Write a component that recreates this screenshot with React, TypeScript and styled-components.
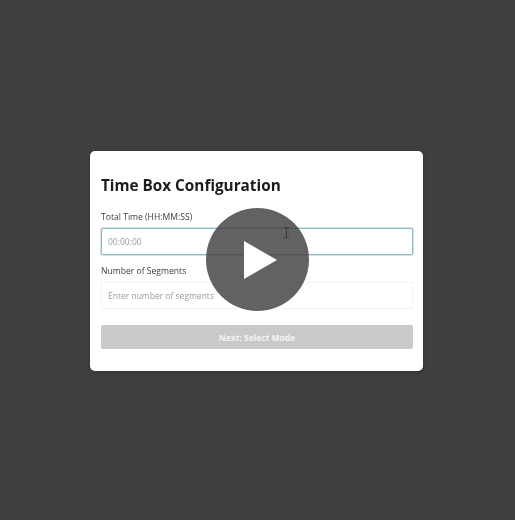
import styled, { createGlobalStyle } from 'styled-components'

const GlobalStyle = createGlobalStyle`
	html,
	body {
		margin: 0;
		padding: 0;
		background: #3f3f3f;
	}
`

const App = () => {
	return (
		<Page>
			<GlobalStyle />
			<Card>
				<Title>Time Box Configuration</Title>
				<Field>
					<Label>Total Time (HH:MM:SS)</Label>
					<Input $focused placeholder="00:00:00" readOnly />
				</Field>
				<Field>
					<Label>Number of Segments</Label>
					<Input placeholder="Enter number of segments" readOnly />
				</Field>
				<NextButton disabled>Next: Select Mode</NextButton>
			</Card>
			<TextCursor width="7" height="11" viewBox="0 0 7 11">
				<path
					d="M1 0.5h5M1 10.5h5M3.5 0.5v10"
					stroke="#2f2f2f"
					strokeWidth="1.1"
					fill="none"
				/>
			</TextCursor>
			<PlayOverlay>
				<svg width="36" height="40" viewBox="0 0 36 40">
					<polygon points="1,1 34,20 1,39" fill="#fff" />
				</svg>
			</PlayOverlay>
		</Page>
	)
}

export default App

const Page = styled.div`
	position: relative;
	box-sizing: border-box;
	width: 515px;
	height: 520px;
	padding: 151px 92px 149px 90px;
	background: #3f3f3f;
	font-family: 'Open Sans', 'Noto Sans', sans-serif;
	overflow: hidden;
`

const Card = styled.div`
	box-sizing: border-box;
	display: flex;
	flex-direction: column;
	width: 333px;
	height: 220px;
	padding: 23px 10px 0 11px;
	background: #fff;
	border-radius: 5px;
	box-shadow: 0 1px 4px rgba(0, 0, 0, 0.25);
	filter: blur(0.3px);
`

const Title = styled.h1`
	margin: 0 0 15px;
	font-size: 15.3px;
	line-height: 22px;
	font-weight: 700;
	color: #1c1c1c;
`

const Field = styled.div`
	display: flex;
	flex-direction: column;
	margin-bottom: 10px;
`

const Label = styled.label`
	margin-bottom: 4px;
	font-size: 8.6px;
	line-height: 13px;
	font-weight: 500;
	color: #3c3c3c;
`

const Input = styled.input<{ $focused?: boolean }>`
	box-sizing: border-box;
	width: 100%;
	height: 27px;
	padding: 0 6px;
	border: 1px solid ${(p) => (p.$focused ? '#8fbcc4' : '#f2f2f2')};
	box-shadow: ${(p) => (p.$focused ? '0 0 0 1px #cfe3e6' : 'none')};
	border-radius: 2px;
	outline: none;
	background: #fff;
	font-family: inherit;
	font-size: 8.5px;
	color: #444;

	&::placeholder {
		color: #9a9a9a;
		opacity: 1;
	}
`

const NextButton = styled.button`
	height: 24px;
	margin-top: 6px;
	padding: 0;
	border: none;
	border-radius: 2px;
	background: #c9c9c9;
	color: #f4f4f4;
	font-family: inherit;
	font-size: 8.5px;
	font-weight: 700;
`

const TextCursor = styled.svg`
	position: absolute;
	left: 283px;
	top: 227px;
`

const PlayOverlay = styled.div`
	position: absolute;
	left: 206px;
	top: 208px;
	display: flex;
	align-items: center;
	justify-content: center;
	width: 103px;
	height: 103px;
	padding: 1px 0 0 7px;
	box-sizing: border-box;
	border-radius: 50%;
	background: rgba(64, 64, 64, 0.82);
`
